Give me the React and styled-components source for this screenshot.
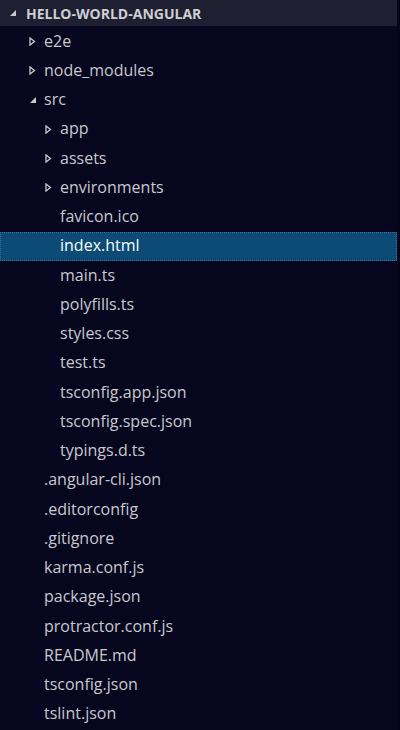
import styled, { createGlobalStyle } from "styled-components";

const GlobalStyle = createGlobalStyle`
  html, body {
    margin: 0;
    padding: 0;
    background: #06061f;
  }
  body {
    font-family: "Open Sans", "Noto Sans", sans-serif;
  }
`;

const Explorer = styled.div`
  width: 400px;
  height: 730px;
  background: #06061f;
  display: flex;
  flex-direction: column;
  overflow: hidden;
  box-sizing: border-box;
  border-right: 3px solid #03031a;
`;

const Header = styled.div`
  height: 26px;
  background: #1e1f31;
  display: flex;
  align-items: center;
  padding-left: 9px;
  gap: 9px;
  color: #cfcfd4;
  font-size: 14px;
  font-weight: 700;
  flex-shrink: 0;
`;

const Tree = styled.div`
  display: flex;
  flex-direction: column;
  padding-top: 1px;
`;

const Row = styled.div`
  height: 29.25px;
  display: flex;
  align-items: center;
  padding-left: ${(p) => 44 + p.level * 16}px;
  background: ${(p) => (p.selected ? "#0b4b75" : "transparent")};
  outline: ${(p) => (p.selected ? "1px dotted #3a6e93" : "none")};
  outline-offset: -1px;
  color: ${(p) => (p.selected ? "#ffffff" : "#c9c9cc")};
  font-size: 16px;
  box-sizing: border-box;
  flex-shrink: 0;
`;

const Twisty = styled.span`
  width: 16px;
  margin-left: -16px;
  display: flex;
  align-items: center;
  padding-left: 1px;
  box-sizing: border-box;
`;

const Label = styled.span`
  white-space: nowrap;
  line-height: 1;
  padding-bottom: 2px;
`;

const Collapsed = () => (
  <svg width="7" height="9" viewBox="0 0 7 9">
    <path d="M1 1 L5.5 4.5 L1 8 Z" fill="none" stroke="#c9c9cc" strokeWidth="1.3" />
  </svg>
);

const Expanded = () => (
  <svg width="8" height="8" viewBox="0 0 8 8">
    <path d="M7 1 L7 7 L1 7 Z" fill="#c9c9cc" />
  </svg>
);

const items = [
  { name: "e2e", level: 1, folder: "closed" },
  { name: "node_modules", level: 1, folder: "closed" },
  { name: "src", level: 1, folder: "open" },
  { name: "app", level: 2, folder: "closed" },
  { name: "assets", level: 2, folder: "closed" },
  { name: "environments", level: 2, folder: "closed" },
  { name: "favicon.ico", level: 2 },
  { name: "index.html", level: 2, selected: true },
  { name: "main.ts", level: 2 },
  { name: "polyfills.ts", level: 2 },
  { name: "styles.css", level: 2 },
  { name: "test.ts", level: 2 },
  { name: "tsconfig.app.json", level: 2 },
  { name: "tsconfig.spec.json", level: 2 },
  { name: "typings.d.ts", level: 2 },
  { name: ".angular-cli.json", level: 1 },
  { name: ".editorconfig", level: 1 },
  { name: ".gitignore", level: 1 },
  { name: "karma.conf.js", level: 1 },
  { name: "package.json", level: 1 },
  { name: "protractor.conf.js", level: 1 },
  { name: "README.md", level: 1 },
  { name: "tsconfig.json", level: 1 },
  { name: "tslint.json", level: 1 },
];

const App = () => {
  return (
    <>
      <GlobalStyle />
      <Explorer>
        <Header>
          <Expanded />
          <span>HELLO-WORLD-ANGULAR</span>
        </Header>
        <Tree>
          {items.map((item) => (
            <Row key={item.name} level={item.level - 1} selected={item.selected}>
              {item.folder && (
                <Twisty>{item.folder === "open" ? <Expanded /> : <Collapsed />}</Twisty>
              )}
              <Label>{item.name}</Label>
            </Row>
          ))}
        </Tree>
      </Explorer>
    </>
  );
};

export default App;
